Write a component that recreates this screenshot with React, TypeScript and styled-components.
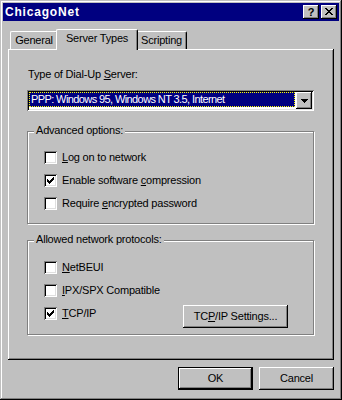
import React from 'react';
import styled, { createGlobalStyle, css } from 'styled-components';

const GlobalStyle = createGlobalStyle`
  html, body {
    margin: 0;
    padding: 0;
    background: #c0c0c0;
  }
  body {
    font-family: "Liberation Sans", Arial, sans-serif;
    font-size: 11px;
    line-height: 13px;
    letter-spacing: -0.2px;
    color: #000;
  }
  * {
    box-sizing: border-box;
  }
`;

const raised = css`
  box-shadow: inset -1px -1px #000, inset 1px 1px #fff, inset -2px -2px #808080;
`;

const sunken = css`
  box-shadow: inset 1px 1px #808080, inset -1px -1px #fff, inset 2px 2px #000, inset -2px -2px #dfdfdf;
`;

const Window = styled.div`
  width: 342px;
  height: 400px;
  padding: 3px;
  background: #c0c0c0;
  box-shadow: inset -1px -1px #000, inset 1px 1px #c0c0c0, inset -2px -2px #808080, inset 2px 2px #fff;
  display: flex;
  flex-direction: column;
`;

const TitleBar = styled.div`
  height: 18px;
  background: #000080;
  display: flex;
  align-items: center;
  padding: 0 2px;
`;

const Title = styled.div`
  flex: 1;
  color: #fff;
  font-weight: bold;
  font-size: 12px;
  letter-spacing: 0.8px;
`;

const CaptionButtons = styled.div`
  display: flex;
  gap: 2px;
`;

const CaptionButton = styled.div`
  width: 16px;
  height: 14px;
  background: #c0c0c0;
  ${raised};
  display: flex;
  align-items: center;
  justify-content: center;
  font-weight: bold;
  font-size: 11px;
  line-height: 12px;
  padding-bottom: 1px;
`;

const Body = styled.div`
  flex: 1;
  padding: 8px 5px 0;
  display: flex;
  flex-direction: column;
`;

const TabStrip = styled.div`
  height: 20px;
  display: flex;
  align-items: flex-end;
  padding-left: 2px;
`;

const Tab = styled.div<{ $w: number; $active?: boolean }>`
  position: relative;
  z-index: ${(p) => (p.$active ? 1 : 0)};
  width: ${(p) => p.$w + (p.$active ? 4 : 0)}px;
  height: ${(p) => (p.$active ? 21 : 18)}px;
  margin: 0 ${(p) => (p.$active ? -2 : 0)}px ${(p) => (p.$active ? -1 : 0)}px;
  padding-top: 2px;
  background: #c0c0c0;
  border: 1px solid #fff;
  border-right-color: #000;
  border-bottom: none;
  border-radius: 2px 2px 0 0;
  box-shadow: inset -1px 0 #808080;
  text-align: center;
  white-space: nowrap;
`;

const Panel = styled.div`
  height: 311px;
  background: #c0c0c0;
  ${raised};
  padding: 19px 20px 0 19px;
  display: flex;
  flex-direction: column;
`;

const FieldLabel = styled.div`
  margin-left: 1px;
  height: 13px;
`;

const Combo = styled.div`
  margin-top: 9px;
  height: 21px;
  padding: 2px;
  background: #fff;
  ${sunken};
  display: flex;
`;

const Selection = styled.div`
  flex: 1;
  height: 15px;
  margin-right: 1px;
  padding-left: 1px;
  background: #000080;
  color: #fff;
  letter-spacing: -0.6px;
  border: 1px dotted #ffff00;
  white-space: nowrap;
  overflow: hidden;
`;

const DropButton = styled.div`
  width: 16px;
  height: 17px;
  background: #c0c0c0;
  ${raised};
  display: flex;
  align-items: center;
  justify-content: center;
`;

const GroupBox = styled.div<{ $top: number; $h: number; $pt: number }>`
  position: relative;
  margin-top: ${(p) => p.$top}px;
  height: ${(p) => p.$h}px;
  padding: ${(p) => p.$pt}px 25px 0 16px;
  border: 1px solid #808080;
  box-shadow: inset 1px 1px #fff, 1px 1px #fff;
  display: flex;
  flex-direction: column;
  gap: 10px;
`;

const Legend = styled.div`
  position: absolute;
  top: -8px;
  left: 6px;
  padding: 0 2px;
  background: #c0c0c0;
  white-space: nowrap;
`;

const CheckItem = styled.label`
  height: 13px;
  display: flex;
  align-items: center;
  gap: 5px;
  white-space: nowrap;
`;

const Box = styled.span`
  width: 13px;
  height: 13px;
  flex: none;
  background: #fff;
  ${sunken};
  display: flex;
  padding: 3px;
`;

const ProtoRow = styled.div`
  display: flex;
  align-items: flex-start;
`;

const PushButton = styled.div<{ $w: number; $default?: boolean; $shift?: number }>`
  width: ${(p) => p.$w}px;
  height: 23px;
  margin-top: ${(p) => p.$shift ?? 0}px;
  background: #c0c0c0;
  ${raised};
  ${(p) => p.$default && 'border: 1px solid #000;'}
  display: flex;
  align-items: center;
  justify-content: center;
  white-space: nowrap;
`;

const Settings = styled(PushButton)`
  margin-left: auto;
`;

const Footer = styled.div`
  margin-top: 7px;
  display: flex;
  justify-content: flex-end;
  gap: 6px;
`;

const CloseGlyph = () => (
  <svg width="8" height="7" viewBox="0 0 8 7" shapeRendering="crispEdges">
    <path d="M0 0h2v1h-2z M6 0h2v1h-2z M1 1h2v1h-2z M5 1h2v1h-2z M2 2h4v1h-4z M3 3h2v1h-2z M2 4h4v1h-4z M1 5h2v1h-2z M5 5h2v1h-2z M0 6h2v1h-2z M6 6h2v1h-2z" fill="#000" />
  </svg>
);

const ArrowGlyph = () => (
  <svg width="7" height="4" viewBox="0 0 7 4" shapeRendering="crispEdges">
    <path d="M0 0h7v1h-7z M1 1h5v1h-5z M2 2h3v1h-3z M3 3h1v1h-1z" fill="#000" />
  </svg>
);

const CheckGlyph = () => (
  <svg width="7" height="7" viewBox="0 0 7 7" shapeRendering="crispEdges">
    <path d="M6 0h1v1h-1z M5 1h2v1h-2z M0 2h1v1h-1z M4 2h3v1h-3z M0 3h2v1h-2z M3 3h3v1h-3z M0 4h5v1h-5z M1 5h3v1h-3z M2 6h1v1h-1z" fill="#000" />
  </svg>
);

const Check = ({ checked, children }: { checked?: boolean; children: React.ReactNode }) => (
  <CheckItem>
    <Box>{checked && <CheckGlyph />}</Box>
    <span>{children}</span>
  </CheckItem>
);

export default function App() {
  return (
    <>
      <GlobalStyle />
      <Window>
        <TitleBar>
          <Title>ChicagoNet</Title>
          <CaptionButtons>
            <CaptionButton>?</CaptionButton>
            <CaptionButton>
              <CloseGlyph />
            </CaptionButton>
          </CaptionButtons>
        </TitleBar>
        <Body>
          <TabStrip>
            <Tab $w={48}>General</Tab>
            <Tab $w={78} $active>
              Server Types
            </Tab>
            <Tab $w={51}>Scripting</Tab>
          </TabStrip>
          <Panel>
            <FieldLabel>
              Type of Dial-Up <u>S</u>erver:
            </FieldLabel>
            <Combo>
              <Selection>PPP: Windows 95, Windows NT 3.5, Internet</Selection>
              <DropButton>
                <ArrowGlyph />
              </DropButton>
            </Combo>
            <GroupBox $top={20} $h={93} $pt={19}>
              <Legend>Advanced options:</Legend>
              <Check>
                <u>L</u>og on to network
              </Check>
              <Check checked>
                Enable software <u>c</u>ompression
              </Check>
              <Check>
                Require <u>e</u>ncrypted password
              </Check>
            </GroupBox>
            <GroupBox $top={16} $h={95} $pt={20}>
              <Legend>Allowed network protocols:</Legend>
              <Check>
                <u>N</u>etBEUI
              </Check>
              <Check>
                <u>I</u>PX/SPX Compatible
              </Check>
              <ProtoRow>
                <Check checked>
                  <u>T</u>CP/IP
                </Check>
                <Settings $w={105} $shift={-2}>
                  TC<u>P</u>/IP Settings...
                </Settings>
              </ProtoRow>
            </GroupBox>
          </Panel>
          <Footer>
            <PushButton $w={75} $default>
              OK
            </PushButton>
            <PushButton $w={75}>Cancel</PushButton>
          </Footer>
        </Body>
      </Window>
    </>
  );
}
